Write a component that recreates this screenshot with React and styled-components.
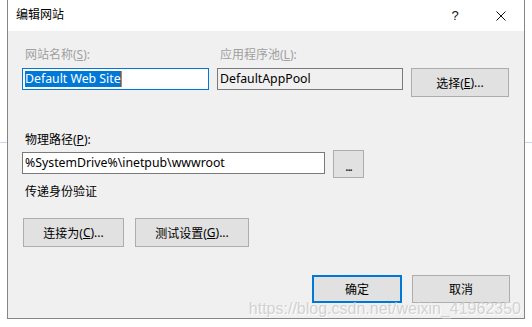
import React from 'react';
import styled, {createGlobalStyle} from 'styled-components';

const GlobalStyle = createGlobalStyle`
    body {
        margin: 0;
        background: #fff linear-gradient(to bottom, transparent 142px, #c9d6ec 142px, #c9d6ec 143px, transparent 143px) no-repeat;
        font-family: "Noto Sans", "Noto Sans CJK SC", sans-serif;
        font-size: 12px;
        color: #000;
    }
`;

const App = () => {
    return (
        <>
            <GlobalStyle />
            <Dialog>
                <TitleBar>
                    <Title>编辑网站</Title>
                    <Caption>
                        <CaptionButton>?</CaptionButton>
                        <CaptionButton>
                            <svg width="10" height="10" viewBox="0 0 10 10">
                                <path d="M0.5 0.5 L9.5 9.5 M9.5 0.5 L0.5 9.5" stroke="#111" strokeWidth="1" fill="none" />
                            </svg>
                        </CaptionButton>
                    </Caption>
                </TitleBar>

                <Content>
                    <SiteGrid>
                        <Label $disabled>网站名称(<u>S</u>):</Label>
                        <Label $disabled>应用程序池(<u>L</u>):</Label>
                        <span />
                        <TextBox $focused>
                            <Selected>Default Web Site</Selected>
                            <Caret />
                        </TextBox>
                        <TextBox $readOnly>DefaultAppPool</TextBox>
                        <Button $height={29}>选择(<u>E</u>)...</Button>
                    </SiteGrid>

                    <Label $top={35}>物理路径(<u>P</u>):</Label>
                    <PathRow>
                        <TextBox $width={303}>%SystemDrive%\inetpub\wwwroot</TextBox>
                        <BrowseButton>...</BrowseButton>
                    </PathRow>

                    <Label $top={6}>传递身份验证</Label>
                    <ActionRow>
                        <Button $width={101} $height={29}>连接为(<u>C</u>)...</Button>
                        <Button $width={114} $height={29}>测试设置(<u>G</u>)...</Button>
                    </ActionRow>

                    <Footer>
                        <Button $width={90} $height={28} $default>确定</Button>
                        <Button $width={98} $height={28}>取消</Button>
                    </Footer>
                </Content>
                <Watermark>https://blog.csdn.net/weixin_41962350</Watermark>
            </Dialog>
        </>
    );
}

const Dialog = styled.div`
    position: relative;
    box-sizing: border-box;
    margin-left: 7px;
    width: 518px;
    height: 319px;
    border: 1px solid #858585;
    border-top: none;
    background: #f0f0f0;
    display: flex;
    flex-direction: column;
`;

const TitleBar = styled.div`
    height: 31px;
    background: #fff;
    display: flex;
    align-items: center;
    padding-left: 8px;
`;

const Title = styled.div`
    font-size: 12px;
    line-height: 16px;
    margin-top: -1px;
`;

const Caption = styled.div`
    margin-left: auto;
    display: flex;
    height: 100%;
`;

const CaptionButton = styled.div`
    width: 46px;
    height: 100%;
    display: flex;
    align-items: center;
    justify-content: center;
    font-family: "Liberation Sans", sans-serif;
    font-size: 13px;
    color: #111;
`;

const Content = styled.div`
    display: flex;
    flex-direction: column;
    align-items: flex-start;
    padding: 16px 14px 0 14px;
`;

const Label = styled.div`
    height: 16px;
    line-height: 16px;
    padding-left: 3px;
    margin-top: ${p => p.$top || 0}px;
    color: ${p => p.$disabled ? '#a0a0a0' : '#000'};
    white-space: nowrap;
`;

const SiteGrid = styled.div`
    display: grid;
    grid-template-columns: 187px 186px 98px;
    column-gap: 8px;
    row-gap: 5px;
    align-items: start;
`;

const TextBox = styled.div`
    box-sizing: border-box;
    width: ${p => p.$width ? p.$width + 'px' : 'auto'};
    height: 22px;
    padding: 0 2px;
    font-size: 12.3px;
    line-height: 20px;
    display: flex;
    align-items: center;
    white-space: nowrap;
    border: 1px solid ${p => p.$focused ? '#0078d7' : '#7a7a7a'};
    background: ${p => p.$readOnly ? '#f0f0f0' : '#fff'};
`;

const Selected = styled.span`
    background: #0078d7;
    color: #fff;
    line-height: 16px;
    height: 16px;
`;

const Caret = styled.span`
    width: 1px;
    height: 16px;
    background: #e8741c;
`;

const Button = styled.button`
    box-sizing: border-box;
    width: ${p => p.$width ? p.$width + 'px' : 'auto'};
    height: ${p => p.$height}px;
    padding: 0;
    font-family: inherit;
    font-size: 12px;
    color: #000;
    background: #e1e1e1;
    border: ${p => p.$default ? '2px solid #0078d7' : '1px solid #adadad'};
    display: flex;
    align-items: center;
    justify-content: center;
    white-space: nowrap;
`;

const PathRow = styled.div`
    display: flex;
    align-items: flex-start;
    gap: 8px;
    margin-top: 2px;

    & > div {
        margin-top: 2px;
    }
`;

const BrowseButton = styled(Button)`
    width: 31px;
    height: 28px;
    padding-top: 4px;
    letter-spacing: -1px;
`;

const ActionRow = styled.div`
    display: flex;
    gap: 11px;
    margin-top: 18px;
    margin-left: 1px;
`;

const Footer = styled.div`
    align-self: stretch;
    display: flex;
    justify-content: flex-end;
    gap: 10px;
    margin-top: 28px;
`;

const Watermark = styled.div`
    position: absolute;
    right: 3px;
    bottom: 0;
    font-family: "Liberation Sans", Arial, sans-serif;
    font-size: 16px;
    line-height: 18px;
    color: rgba(205, 205, 205, 0.9);
    text-shadow: 1px 1px 0 rgba(255, 255, 255, 0.9);
    white-space: nowrap;
    pointer-events: none;
`;

export default App;
